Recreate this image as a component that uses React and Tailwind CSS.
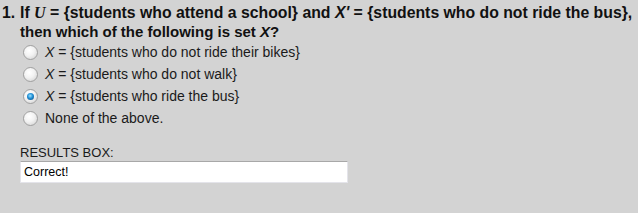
import { useState } from 'react';

const opciones = [
  { id: 'a', x: true, texto: '{students who do not ride their bikes}' },
  { id: 'b', x: true, texto: '{students who do not walk}' },
  { id: 'c', x: true, texto: '{students who ride the bus}' },
  { id: 'd', x: false, texto: 'None of the above.' },
];

function Radio({ checked }) {
  return (
    <span className="relative inline-block shrink-0 w-[15px] h-[15px] rounded-full border border-[#a0a0a0] bg-[radial-gradient(circle_at_40%_35%,#ffffff_0%,#f2f2f2_45%,#cdcdcd_100%)]">
      {checked && (
        <span className="absolute left-[3px] top-[3px] w-[7px] h-[7px] rounded-full bg-[radial-gradient(circle_at_45%_40%,#9fe3ff_0%,#1f8fd6_45%,#0b3f6e_100%)]" />
      )}
    </span>
  );
}

export default function App() {
  const [sel, setSel] = useState('c');
  return (
    <div className="w-[638px] h-[213px] bg-[#d3d3d3] text-[#111] font-['Liberation_Sans',Arial,sans-serif] overflow-hidden">
      <div className="pl-[2px] pt-[3px] font-bold leading-[19px] whitespace-nowrap">
        <div className="flex text-[15.8px]">
          <span className="w-[18px]">1.</span>
          <span>
            If <span className="font-['Liberation_Serif',serif] italic text-[16px]">U</span> = {'{'}students who attend a school{'}'} and <span className="italic">X'</span> = {'{'}students who do not ride the bus{'}'},
          </span>
        </div>
        <div className="pl-[18px] text-[15px]">
          then which of the following is set <span className="italic">X</span>?
        </div>
      </div>

      <div className="pl-[23px] flex flex-col text-[14px] leading-[22px] text-[#1a1a1a]">
        {opciones.map(o => (
          <label key={o.id} className="flex items-center gap-[7px] cursor-pointer" onClick={() => setSel(o.id)}>
            <Radio checked={sel === o.id} />
            <span>
              {o.x && <><span className="italic">X</span> = </>}
              {o.texto}
            </span>
          </label>
        ))}
      </div>

      <div className="mt-[17px] pl-[20px] text-[13px] leading-[14px] text-[#1a1a1a]">
        <div>RESULTS BOX:</div>
        <div className="mt-[1px] w-[328px] h-[22px] bg-white border border-[#e4e4ea] border-t-[#a8a8a8] pl-[3px] flex items-center text-[12.5px] text-[#000]">
          Correct!
        </div>
      </div>
    </div>
  );
}
